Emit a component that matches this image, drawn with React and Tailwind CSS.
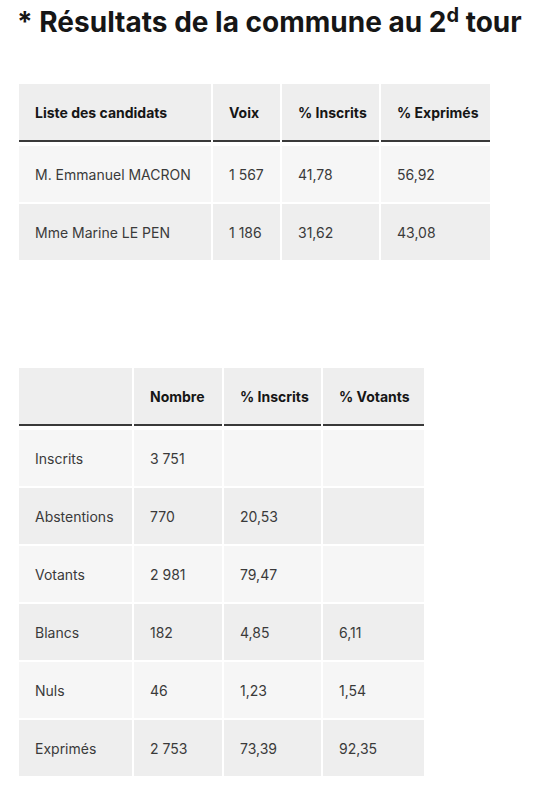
import React from "react";

const font = { fontFamily: "Inter, 'Open Sans', sans-serif" };

function Table({ cols, head, rows, className, width }) {
  return (
    <table
      className={"table-fixed border-separate border-spacing-[2px] ml-[17px] " + className}
      style={{ width }}
    >
      <colgroup>
        {cols.map((w, i) => (
          <col key={i} style={{ width: w }} />
        ))}
      </colgroup>
      <thead>
        <tr>
          {head.map((h, i) => (
            <th
              key={i}
              className="h-[58px] bg-[#eeeeee] border-b-2 border-[#3a3a3a] px-4 text-left text-[14px] font-bold text-[#161616] align-middle whitespace-nowrap"
            >
              {h}
            </th>
          ))}
        </tr>
        <tr>
          <td colSpan={head.length} className="h-0 p-0"></td>
        </tr>
      </thead>
      <tbody>
        {rows.map((r, ri) => (
          <tr key={ri} className={ri % 2 === 0 ? "bg-[#f6f6f6]" : "bg-[#eeeeee]"}>
            {r.map((c, ci) => (
              <td key={ci} className="h-[56px] px-4 text-[14px] text-[#3a3a3a] align-middle whitespace-nowrap">
                {c}
              </td>
            ))}
          </tr>
        ))}
      </tbody>
    </table>
  );
}

export default function App() {
  return (
    <div className="bg-white w-[544px] h-[793px] overflow-hidden" style={font}>
      <h1 className="pl-[17px] pt-[4px] text-[28px] leading-[36px] font-bold text-[#161616]">
        * Résultats de la commune au 2<sup className="text-[20px]">d</sup> tour
      </h1>
      <Table
        className="mt-[42px]"
        width={475}
        cols={[192, 67, 97, 109]}
        head={["Liste des candidats", "Voix", "% Inscrits", "% Exprimés"]}
        rows={[
          ["M. Emmanuel MACRON", "1 567", "41,78", "56,92"],
          ["Mme Marine LE PEN", "1 186", "31,62", "43,08"],
        ]}
      />
      <Table
        className="mt-[104px]"
        width={409}
        cols={[113, 88, 97, 101]}
        head={["", "Nombre", "% Inscrits", "% Votants"]}
        rows={[
          ["Inscrits", "3 751", "", ""],
          ["Abstentions", "770", "20,53", ""],
          ["Votants", "2 981", "79,47", ""],
          ["Blancs", "182", "4,85", "6,11"],
          ["Nuls", "46", "1,23", "1,54"],
          ["Exprimés", "2 753", "73,39", "92,35"],
        ]}
      />
    </div>
  );
}
